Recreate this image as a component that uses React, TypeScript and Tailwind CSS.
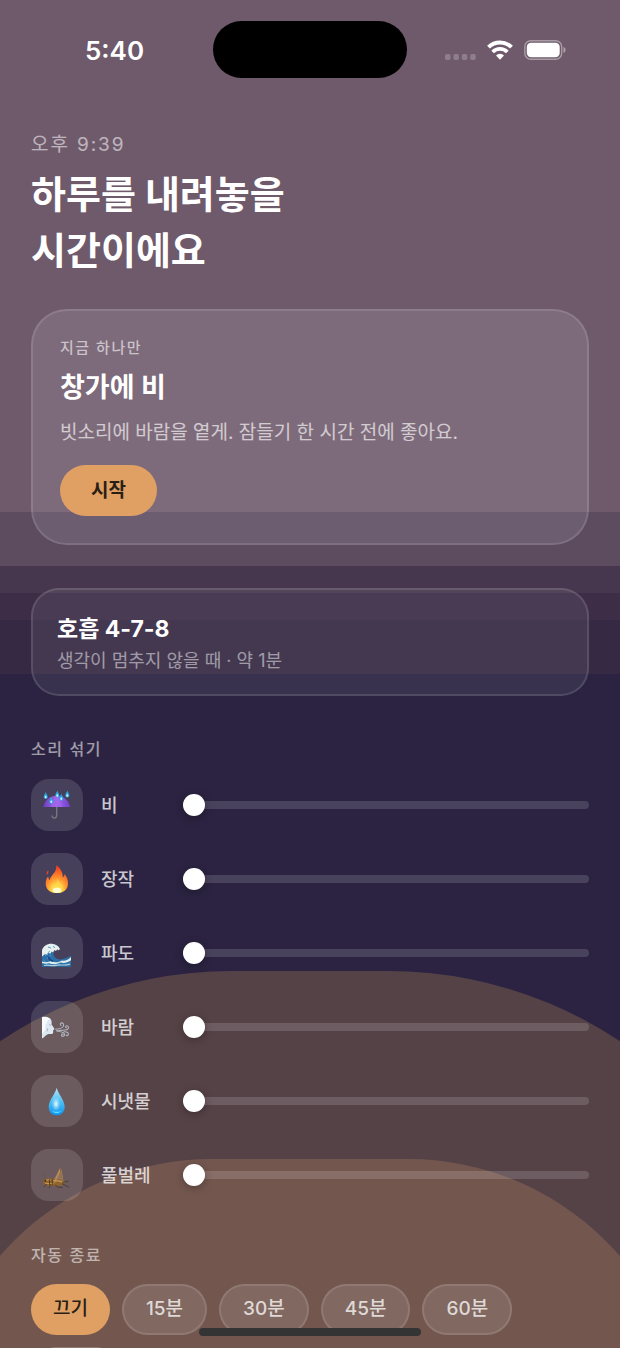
import { useState, type ReactNode } from "react";

function RainIcon() {
  return (
    <svg viewBox="0 0 52 52" className="size-full" aria-hidden="true">
      <defs>
        <linearGradient id="canopy" x1="0" x2="1" y1="0" y2="0">
          <stop offset="0" stopColor="#6a3fc0" />
          <stop offset="0.5" stopColor="#a466ee" />
          <stop offset="1" stopColor="#6f3fc9" />
        </linearGradient>
      </defs>
      <path d="M25.7 27v9.6c0 3.2-4.6 3.2-4.6.4" fill="none" stroke="#77757c" strokeWidth="1.4" strokeLinecap="round" />
      <path d="M12.4 28c1.4-7.400 7-11.200 13.300-11.200S37.600 20.600 39 28z" fill="url(#canopy)" />
      <path d="M20 28c.4-5 3-8.600 5.700-11.200 2.700 2.600 5.300 6.200 5.700 11.200" fill="#a468ee" opacity=".6" />
      {[[14.7, 17], [26.3, 15.6], [36.3, 15.6], [20.3, 21.700], [30.3, 18.700]].map(([x, y]) => (
        <g key={x}>
          <path d={`M${x} ${y - 4}c.6 2 2 3.300 2 5a2 2 0 0 1-4 0c0-1.700 1.400-3 2-5z`} fill="#2ba6e4" />
          <ellipse cx={x} cy={y + 1} rx=".9" ry="1.300" fill="#c5f2ff" />
        </g>
      ))}
    </svg>
  );
}

function FireIcon() {
  return (
    <svg viewBox="0 0 52 52" className="size-full" aria-hidden="true">
      <defs>
        <radialGradient id="flame" cx="0.5" cy="0.92" r="0.85">
          <stop offset="0" stopColor="#fff6a0" />
          <stop offset="0.25" stopColor="#ffd84a" />
          <stop offset="0.55" stopColor="#ff9330" />
          <stop offset="1" stopColor="#f2431f" />
        </radialGradient>
      </defs>
      <path d="M25.200 12.300c4.200 2.600 6.800 7 6.600 12.200 1-.8 1.700-2 1.900-3.500 2.300 3 3.300 6 3.300 9.200C37 36.500 32.800 40 26 40s-11.300-3.500-11.300-9.600c0-2.800.9-5.200 2.500-7.200.2 1.800.6 3 1.400 4 .4-2 1.200-3.500 2.600-5 2.600-2.800 4.600-5.600 4-9.900z" fill="url(#flame)" />
      <path d="M17.300 17.600c-1.600 1-2 2.600-1.500 4.200 1.500-.8 1.900-2.400 1.500-4.200z" fill="#f2431f" />
      <path d="M26.300 25.500c.5 3.500 5.400 5 5.400 9.500 0 3-2 5-5.600 5-3.700 0-5.900-2-5.900-5 0-2 .8-3.400 1.800-4.500.2 1.500.7 2.200 1.400 2.700 1.700-2 3.200-4.300 2.900-7.700z" fill="#ffd84a" opacity=".8" />
      <ellipse cx="26" cy="37.300" rx="4.200" ry="2.700" fill="#fffbd0" />
    </svg>
  );
}

function WaveIcon() {
  return (
    <svg viewBox="0 0 52 52" className="size-full" aria-hidden="true">
      <path d="M11 39.800V24c1.600-4 5-7.100 9.500-7.300 3.700-.1 7.300 2 8.500 5.400-2-.7-3.400-.4-4.700.6-2.600 2-2.400 5.500.2 8 3.200 3 9.500 1.800 15.500-2.200v11.300z" fill="#2d6fa8" />
      <path d="M11 29.500V23c1.400-4.200 5.300-6.500 9.500-6.300 3.800.2 7 1.800 8.500 5.400l-1.600 1.500-.8-1.400-1.800 1.800-1.400-1-1.300 2.500-1.500-1-1.300 2.300-2-1-1.300 2.500-2-1.200z" fill="#e6f0ee" />
      <path d="M14 28.500c2-1 3.500-2.500 4.500-4.500M16.500 32c1-2 2-3 3.500-4M12.500 33c1.500 1 2.500 2.500 3 4.500M17 20l3 1M22 19.500l2 1" fill="none" stroke="#5d9fc0" strokeWidth="1" />
      <path d="M11 34.500c4 1.200 6 .6 9-.4 4 2 8 1.200 11-.6 3 .8 6-.4 9-3.500v3.300c-4 2.700-7 3.200-10.500 2.200-4 2.200-8 2.200-11.500.8-2.500.6-4.500.6-7-.4z" fill="#dfeeee" />
      <path d="M13 38.500c4-1 8 .8 12-.2s8 .6 14-1.200" fill="none" stroke="#a9d1dc" strokeWidth="1.200" />
      <path d="M17.500 29.500c.4 2.500 2 4 4.500 4.600" fill="none" stroke="#174a86" strokeWidth="1.600" />
    </svg>
  );
}

function WindIcon() {
  return (
    <svg viewBox="0 0 52 52" className="size-full" aria-hidden="true">
      <path d="M11 16c5-.8 9 .6 9.600 4.400.2 1.400-.2 2.300.2 3.300.5 1.300 2.500 3 2.600 4.200 0 .8-1.200.9-1.300 1.600-.1.900.5 1.700-.2 2.700-1 1.400-4 .3-5.700 1.300-1.600 1-2.600 2.500-5.200 4z" fill="#dde7f1" />
      <path d="M11 16.200c3.400-.3 6.400.2 7.800 2-2.600.6-2.600 3.600-4 5.300-.8 1.200.4 3.200-.6 5-.8 1.600-1.600 3-3.200 4.300z" fill="#f8fbfd" />
      <path d="M18.300 23.600c.8.600 1.500.6 2.200.2M16 27.500c.8.800.8 2 0 2.800" fill="none" stroke="#8c9db1" strokeWidth=".8" />
      <g fill="none" stroke="#bcc4cf" strokeOpacity=".85" strokeWidth="1.100" strokeLinecap="round">
        <path d="M24.500 28.200c3-.3 6-.6 7.400-2.200 1.500-1.700.6-4.300-1.300-4.100-1.500.2-1.800 2.300-.4 2.600" />
        <path d="M25.500 29.200c4 .2 9 .6 11-.9 1.700-1.300.9-3.700-.8-3.600-1.300.1-1.500 1.800-.4 2.100" />
        <path d="M26 30.200c3.200.2 7.400 1 7.600 3.300.1 2-2.600 2.500-3.100 1-.3-1.200 1-1.700 1.600-1M33 30.800c2.400-.2 4.500.6 4.400 2.500-.1 1.500-1.900 1.900-2.300.7" />
      </g>
    </svg>
  );
}

function DropIcon() {
  return (
    <svg viewBox="0 0 52 52" className="size-full" aria-hidden="true">
      <defs>
        <linearGradient id="water" x1="0" x2="0" y1="0" y2="1">
          <stop offset="0" stopColor="#b6e4f7" />
          <stop offset="0.5" stopColor="#4fc0f4" />
          <stop offset="1" stopColor="#0d93ee" />
        </linearGradient>
        <radialGradient id="shine">
          <stop offset="0" stopColor="#f2fdff" />
          <stop offset="1" stopColor="#9be2fb" stopOpacity="0" />
        </radialGradient>
      </defs>
      <path d="M25.700 12.700c1.200 5.800 8 12.700 8 19.300 0 4.800-3.400 8.300-8 8.300s-8-3.500-8-8.300c0-6.600 6.800-13.500 8-19.300z" fill="url(#water)" />
      <ellipse cx="25" cy="29" rx="4.500" ry="7.500" fill="url(#shine)" />
      <path d="M21 35.500c1.800 3.600 7.600 3.600 9.400 0-1 1.600-8 1.800-9.400 0z" fill="#5fdcff" />
    </svg>
  );
}

function CricketIcon() {
  return (
    <svg viewBox="0 0 52 52" className="size-full" aria-hidden="true">
      <path d="M14.500 30.500C13 28 12.300 25.500 12 22.500M15.500 30c-1-2-1.600-3.500-1.700-5.500" fill="none" stroke="#6b574a" strokeWidth=".7" />
      <path d="M22 31.500l7-11.500 2.600 12.500z" fill="#b08a5c" opacity=".55" />
      <path d="M12.300 33c0-2.300 1.300-3.200 3-3 2-1.300 4.600-.8 6.600.2 4-.4 9.500.4 12.600 3.300-2.600 3.300-7.600 4-12 3.300-3.600.2-7.200.4-8.700-1-1-.6-1.500-1.500-1.500-2.800z" fill="#8f642e" />
      <path d="M15.500 31.200c1.500-.8 3-.6 4.500 0M22 31.700c4-.4 7 .2 10.500 1.800M14 34c2.500.8 5.500.8 8.500.4" fill="none" stroke="#c59a58" strokeWidth="1.100" />
      <path d="M23.500 33.500l5.800-13.300c1.200 4 1.600 8.500 2.500 13.500" fill="none" stroke="#b98b55" strokeWidth="1.700" strokeLinejoin="round" />
      <path d="M29.300 19.300c.5 5.500 1.500 11 3.200 15.500" fill="none" stroke="#7b5b36" strokeWidth=".8" />
      <path d="M15.500 35l-2.500 3.200M19.500 35.500L18.300 39M24 36l3.600 2.300h4M31 34.600l7 3.800M31.500 33.500c2.500-.6 4-1 6-1.300" fill="none" stroke="#4b3a2d" strokeWidth=".9" />
      <circle cx="14.200" cy="31.900" r=".8" fill="#2f2118" />
      <path d="M18.600 30.300v5.800M21.300 30.500v5.800" stroke="#4f351b" strokeWidth=".9" />
    </svg>
  );
}

const sounds: { id: string; name: string; icon: ReactNode }[] = [
  { id: "rain", name: "비", icon: <RainIcon /> },
  { id: "fire", name: "장작", icon: <FireIcon /> },
  { id: "wave", name: "파도", icon: <WaveIcon /> },
  { id: "wind", name: "바람", icon: <WindIcon /> },
  { id: "stream", name: "시냇물", icon: <DropIcon /> },
  { id: "cricket", name: "풀벌레", icon: <CricketIcon /> },
];

const timers = ["끄기", "15분", "30분", "45분", "60분", "90분"];

function Backdrop() {
  return (
    <div
      aria-hidden="true"
      className="absolute inset-0 -z-10 overflow-hidden bg-[linear-gradient(to_bottom,#6f5a6b_38%,#5d4b60_38%,#5d4b60_42%,#46374e_42%,#46374e_44%,#3d2d47_44%,#3d2d47_46%,#352943_46%,#352943_50%,#2b2341_50%)]"
    >
      <div className="absolute top-[72%] left-1/2 h-[80%] w-[160%] -translate-x-1/2 rounded-t-[418px] bg-[#554247]" />
      <div className="absolute top-[86%] left-1/2 h-[60%] w-[122%] -translate-x-1/2 rounded-t-[280px] bg-[#73574f]" />
    </div>
  );
}

function StatusBar() {
  return (
    <div className="grid grid-cols-[1fr_194px_1fr] items-center py-[21px] text-white">
      <div className="pt-0.5 pl-4 text-center text-[26px] leading-8 font-semibold">5:40</div>
      <div className="h-[57px] rounded-full bg-black" />
      <div className="flex items-center justify-end gap-[11px] pr-[54px]">
        <svg viewBox="0 0 31 20" className="h-5 w-[31px]" aria-hidden="true" fill="#fff" fillOpacity=".22">
          <rect x="0" y="14" width="5.500" height="6" rx="1.800" />
          <rect x="8.400" y="14" width="5.500" height="6" rx="1.800" />
          <rect x="16.800" y="14" width="5.500" height="6" rx="1.800" />
          <rect x="25.200" y="14" width="5.500" height="6" rx="1.800" />
        </svg>
        <svg viewBox="0 0 26 20" className="h-5 w-[26px]" aria-hidden="true">
          <path d="M1.500 7.200a16.300 16.300 0 0 1 23 0" fill="none" stroke="#fff" strokeWidth="4" />
          <path d="M5.700 12a10.300 10.300 0 0 1 14.600 0" fill="none" stroke="#fff" strokeWidth="3.800" />
          <path d="M9 15.400a5.700 5.700 0 0 1 8 0l-4 4.300z" fill="#fff" />
        </svg>
        <svg viewBox="0 0 42 20" className="h-5 w-[42px]" aria-hidden="true">
          <rect x=".8" y=".8" width="36.900" height="18.400" rx="6" fill="none" stroke="#fff" strokeOpacity=".4" strokeWidth="1.400" />
          <rect x="2.800" y="2.800" width="32.900" height="14.400" rx="4.200" fill="#fff" />
          <path d="M39.500 7v6c1.300-.4 2-1.600 2-3s-.7-2.600-2-3z" fill="#fff" fillOpacity=".45" />
        </svg>
      </div>
    </div>
  );
}

function SoundRow({ id, name, icon }: { id: string; name: string; icon: ReactNode }) {
  const [volume, setVolume] = useState(0);
  return (
    <li className="flex items-center gap-[18px]">
      <span className="size-[52px] shrink-0 rounded-[18px] bg-white/13">{icon}</span>
      <label htmlFor={id} className="w-16 shrink-0 pt-0.5 text-lg leading-6 font-medium text-white/75">
        {name}
      </label>
      <input
        id={id}
        type="range"
        min={0}
        max={100}
        value={volume}
        onChange={(e) => setVolume(Number(e.target.value))}
        className="h-[22px] min-w-0 flex-1 cursor-pointer appearance-none bg-transparent [&::-webkit-slider-runnable-track]:h-2 [&::-webkit-slider-runnable-track]:rounded-full [&::-webkit-slider-runnable-track]:bg-white/14 [&::-webkit-slider-thumb]:-mt-[7px] [&::-webkit-slider-thumb]:size-[22px] [&::-webkit-slider-thumb]:appearance-none [&::-webkit-slider-thumb]:rounded-full [&::-webkit-slider-thumb]:bg-white [&::-webkit-slider-thumb]:shadow-[0_2px_8px_rgba(0,0,0,0.3)]"
      />
    </li>
  );
}

export default function App() {
  const [timer, setTimer] = useState("끄기");
  return (
    <div className="relative isolate flex h-screen flex-col overflow-hidden font-[Inter,'Noto_Sans_CJK_KR',sans-serif]">
      <Backdrop />
      <StatusBar />

      <main className="min-h-0 flex-1 overflow-y-auto px-[31px] pt-[34px] text-white [scrollbar-width:none]">
        <header>
          <p className="text-[19px] leading-6 tracking-widest text-white/55">오후 9:39</p>
          <h1 className="mt-[9px] text-[38px] leading-[56px] font-bold">
            하루를 내려놓을
            <br />
            시간이에요
          </h1>
        </header>

        <section className="mt-[31px] rounded-[36px] border-2 border-white/12 bg-white/10 px-[27px] py-[27px]">
          <p className="text-[15px] leading-5 font-medium tracking-widest text-white/60">지금 하나만</p>
          <h2 className="mt-3 text-[27px] leading-9 font-bold">창가에 비</h2>
          <p className="mt-[13px] text-[19px] leading-7 text-white/65">빗소리에 바람을 옅게. 잠들기 한 시간 전에 좋아요.</p>
          <button type="button" className="mt-[18px] block h-[51px] rounded-full bg-[#e0a064] px-[31px] pt-0.5 text-[19px] font-bold text-[#2a1f14]">
            시작
          </button>
        </section>

        <button type="button" className="mt-[43px] block w-full rounded-[28px] border-2 border-white/12 bg-white/7 px-6 pt-6 pb-[21px] text-left">
          <span className="block text-[23px] leading-[30px] font-bold">호흡 4-7-8</span>
          <span className="mt-[5px] block text-lg leading-6 text-white/50">생각이 멈추지 않을 때 · 약 1분</span>
        </button>

        <section className="mt-[43px]">
          <h2 className="text-base leading-5 font-medium tracking-widest text-white/55">소리 섞기</h2>
          <ul className="mt-5 flex flex-col gap-[22px]">
            {sounds.map((s) => (
              <SoundRow key={s.id} {...s} />
            ))}
          </ul>
        </section>

        <section className="mt-11">
          <h2 className="text-base leading-5 font-medium tracking-widest text-white/55">자동 종료</h2>
          <div className="mt-[19px] flex flex-wrap gap-3">
            {timers.map((t) => (
              <button
                key={t}
                type="button"
                aria-pressed={t === timer}
                onClick={() => setTimer(t)}
                className={
                  t === timer
                    ? "h-[51px] rounded-full bg-[#e0a064] px-[22px] text-[19px] font-medium text-[#2a1f14]"
                    : "h-[51px] rounded-full border-2 border-white/12 bg-white/10 px-[22px] text-[19px] font-medium text-white/75"
                }
              >
                {t}
              </button>
            ))}
          </div>
        </section>
      </main>

      <div aria-hidden="true" className="absolute bottom-3 left-1/2 h-2 w-[222px] -translate-x-1/2 rounded-full bg-[#343434]" />
    </div>
  );
}
